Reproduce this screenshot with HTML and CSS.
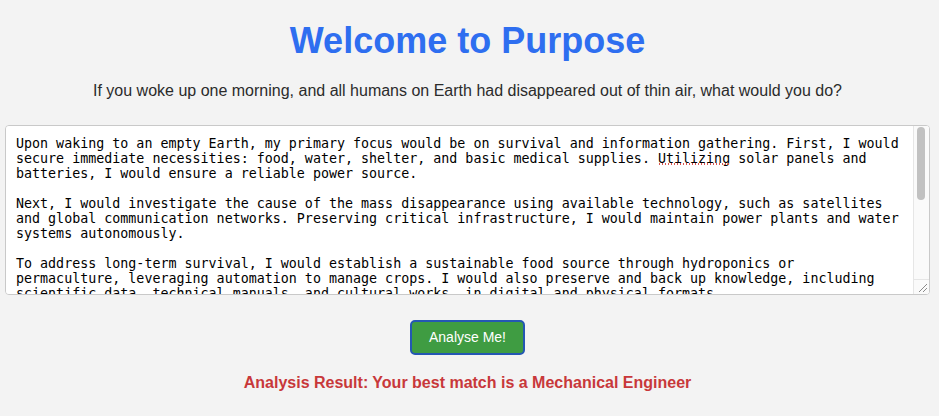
FILE: index.html
```html
<!DOCTYPE html>
<html lang="en">
<head>
<meta charset="utf-8">
<title>Purpose</title>
<link rel="stylesheet" href="styles.css">
</head>
<body>
<main class="page">
  <h1 class="title">Welcome to Purpose</h1>
  <p class="question">If you woke up one morning, and all humans on Earth had disappeared out of thin air, what would you do?</p>
  <div class="answer-wrap">
    <textarea class="answer" spellcheck="false">Upon waking to an empty Earth, my primary focus would be on survival and information gathering. First, I would secure immediate necessities: food, water, shelter, and basic medical supplies. Utilizing solar panels and batteries, I would ensure a reliable power source.

Next, I would investigate the cause of the mass disappearance using available technology, such as satellites and global communication networks. Preserving critical infrastructure, I would maintain power plants and water systems autonomously.

To address long-term survival, I would establish a sustainable food source through hydroponics or permaculture, leveraging automation to manage crops. I would also preserve and back up knowledge, including scientific data, technical manuals, and cultural works, in digital and physical formats.

Additionally, I would search for other survivors by broadcasting radio signals and leaving visible markers in key locations. Establishing a secure base of operations would allow me to coordinate efforts and document my findings systematically.

Ultimately, my goal would be to preserve humanity's legacy while seeking answers, ensuring that if anyone else remains or returns, the foundation for rebuilding civilization is intact.</textarea>
    <div class="spell-mark" aria-hidden="true"></div>
    <div class="scrollbar" aria-hidden="true">
      <div class="scrollbar-track"><div class="scrollbar-thumb"></div></div>
      <div class="scrollbar-corner">
        <svg width="14" height="14" viewBox="0 0 14 14">
          <path d="M4 12 L12 4 M8 12 L12 8" stroke="#8a8a8a" stroke-width="1" fill="none"/>
        </svg>
      </div>
    </div>
  </div>
  <button class="analyse" type="button">Analyse Me!</button>
  <p class="result">Analysis Result: Your best match is a Mechanical Engineer</p>
</main>
</body>
</html>
```

FILE: styles.css
```css
html, body {
  margin: 0;
  padding: 0;
  background: #f3f3f3;
}

body {
  font-family: "Liberation Sans", Arial, sans-serif;
}

.page {
  width: 935px;
  display: flex;
  flex-direction: column;
  align-items: center;
  padding-top: 19.5px;
}

.title {
  margin: 0;
  font-size: 36px;
  line-height: 41.4px;
  font-weight: bold;
  color: #2e6ef0;
}

.question {
  margin: 21.5px 0 0;
  font-size: 16px;
  line-height: 18.4px;
  color: #2b2b2b;
}

.answer-wrap {
  position: relative;
  margin-top: 24px;
  width: 925px;
  height: 170px;
}

.answer {
  display: block;
  box-sizing: border-box;
  width: 100%;
  height: 100%;
  margin: 0;
  padding: 10px 25px 10px 10px;
  border: 1px solid #c9c9c9;
  border-radius: 4px;
  background: #ffffff;
  color: #000;
  font-family: "DejaVu Sans Mono", monospace;
  font-size: 13.333px;
  line-height: 15px;
  resize: none;
  overflow-y: auto;
}

.spell-mark {
  position: absolute;
  left: 653px;
  top: 38px;
  width: 72px;
  height: 2px;
  background-image: radial-gradient(circle, #d9534f 0.9px, transparent 1.1px);
  background-size: 3px 2px;
  pointer-events: none;
}

.scrollbar {
  position: absolute;
  top: 1px;
  right: 1px;
  bottom: 1px;
  width: 15px;
  display: flex;
  flex-direction: column;
  background: #fafafa;
  border-left: 1px solid #e6e6e6;
  border-radius: 0 3px 3px 0;
  pointer-events: none;
}

.scrollbar-track {
  flex: 1;
  padding: 1px 3px 0 3px;
}

.scrollbar-thumb {
  width: 8px;
  height: 73px;
  border-radius: 4px;
  background: #c1c1c1;
}

.scrollbar-corner {
  height: 14px;
  border-top: 1px solid #e6e6e6;
  display: flex;
  justify-content: flex-end;
  align-items: flex-end;
}

.scrollbar-corner svg {
  display: block;
}

.analyse {
  margin-top: 25px;
  height: 35px;
  padding: 0 16.5px;
  background: #3f9c42;
  border: 2px solid #2457b3;
  border-radius: 5px;
  color: #ffffff;
  font-family: "Liberation Sans", Arial, sans-serif;
  font-size: 14px;
  cursor: pointer;
}

.result {
  margin: 19.5px 0 0;
  font-size: 16px;
  line-height: 18.4px;
  font-weight: bold;
  color: #c8383a;
}
```
